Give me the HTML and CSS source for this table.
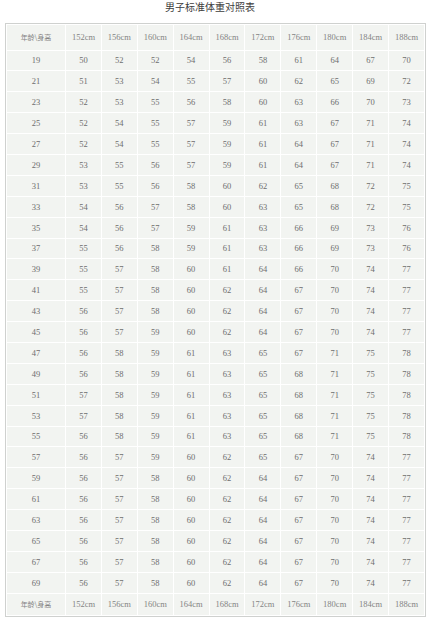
FILE: index.html
```html
<!DOCTYPE html>
<html lang="zh-CN">
<head>
<meta charset="utf-8">
<title>男子标准体重对照表</title>
<link rel="stylesheet" href="styles.css">
</head>
<body>
<div class="page">
  <h1 class="title">男子标准体重对照表</h1>
  <table class="chart">
    <colgroup><col class="col-age"><col><col><col><col><col><col><col><col><col><col></colgroup>
    <thead>
      <tr class="head"><th class="cjk">年龄\身高</th><th>152cm</th><th>156cm</th><th>160cm</th><th>164cm</th><th>168cm</th><th>172cm</th><th>176cm</th><th>180cm</th><th>184cm</th><th>188cm</th></tr>
    </thead>
    <tbody>
      <tr><td>19</td><td>50</td><td>52</td><td>52</td><td>54</td><td>56</td><td>58</td><td>61</td><td>64</td><td>67</td><td>70</td></tr>
      <tr><td>21</td><td>51</td><td>53</td><td>54</td><td>55</td><td>57</td><td>60</td><td>62</td><td>65</td><td>69</td><td>72</td></tr>
      <tr><td>23</td><td>52</td><td>53</td><td>55</td><td>56</td><td>58</td><td>60</td><td>63</td><td>66</td><td>70</td><td>73</td></tr>
      <tr><td>25</td><td>52</td><td>54</td><td>55</td><td>57</td><td>59</td><td>61</td><td>63</td><td>67</td><td>71</td><td>74</td></tr>
      <tr><td>27</td><td>52</td><td>54</td><td>55</td><td>57</td><td>59</td><td>61</td><td>64</td><td>67</td><td>71</td><td>74</td></tr>
      <tr><td>29</td><td>53</td><td>55</td><td>56</td><td>57</td><td>59</td><td>61</td><td>64</td><td>67</td><td>71</td><td>74</td></tr>
      <tr><td>31</td><td>53</td><td>55</td><td>56</td><td>58</td><td>60</td><td>62</td><td>65</td><td>68</td><td>72</td><td>75</td></tr>
      <tr><td>33</td><td>54</td><td>56</td><td>57</td><td>58</td><td>60</td><td>63</td><td>65</td><td>68</td><td>72</td><td>75</td></tr>
      <tr><td>35</td><td>54</td><td>56</td><td>57</td><td>59</td><td>61</td><td>63</td><td>66</td><td>69</td><td>73</td><td>76</td></tr>
      <tr><td>37</td><td>55</td><td>56</td><td>58</td><td>59</td><td>61</td><td>63</td><td>66</td><td>69</td><td>73</td><td>76</td></tr>
      <tr><td>39</td><td>55</td><td>57</td><td>58</td><td>60</td><td>61</td><td>64</td><td>66</td><td>70</td><td>74</td><td>77</td></tr>
      <tr><td>41</td><td>55</td><td>57</td><td>58</td><td>60</td><td>62</td><td>64</td><td>67</td><td>70</td><td>74</td><td>77</td></tr>
      <tr><td>43</td><td>56</td><td>57</td><td>58</td><td>60</td><td>62</td><td>64</td><td>67</td><td>70</td><td>74</td><td>77</td></tr>
      <tr><td>45</td><td>56</td><td>57</td><td>59</td><td>60</td><td>62</td><td>64</td><td>67</td><td>70</td><td>74</td><td>77</td></tr>
      <tr><td>47</td><td>56</td><td>58</td><td>59</td><td>61</td><td>63</td><td>65</td><td>67</td><td>71</td><td>75</td><td>78</td></tr>
      <tr><td>49</td><td>56</td><td>58</td><td>59</td><td>61</td><td>63</td><td>65</td><td>68</td><td>71</td><td>75</td><td>78</td></tr>
      <tr><td>51</td><td>57</td><td>58</td><td>59</td><td>61</td><td>63</td><td>65</td><td>68</td><td>71</td><td>75</td><td>78</td></tr>
      <tr><td>53</td><td>57</td><td>58</td><td>59</td><td>61</td><td>63</td><td>65</td><td>68</td><td>71</td><td>75</td><td>78</td></tr>
      <tr><td>55</td><td>56</td><td>58</td><td>59</td><td>61</td><td>63</td><td>65</td><td>68</td><td>71</td><td>75</td><td>78</td></tr>
      <tr><td>57</td><td>56</td><td>57</td><td>59</td><td>60</td><td>62</td><td>65</td><td>67</td><td>70</td><td>74</td><td>77</td></tr>
      <tr><td>59</td><td>56</td><td>57</td><td>58</td><td>60</td><td>62</td><td>64</td><td>67</td><td>70</td><td>74</td><td>77</td></tr>
      <tr><td>61</td><td>56</td><td>57</td><td>58</td><td>60</td><td>62</td><td>64</td><td>67</td><td>70</td><td>74</td><td>77</td></tr>
      <tr><td>63</td><td>56</td><td>57</td><td>58</td><td>60</td><td>62</td><td>64</td><td>67</td><td>70</td><td>74</td><td>77</td></tr>
      <tr><td>65</td><td>56</td><td>57</td><td>58</td><td>60</td><td>62</td><td>64</td><td>67</td><td>70</td><td>74</td><td>77</td></tr>
      <tr><td>67</td><td>56</td><td>57</td><td>58</td><td>60</td><td>62</td><td>64</td><td>67</td><td>70</td><td>74</td><td>77</td></tr>
      <tr><td>69</td><td>56</td><td>57</td><td>58</td><td>60</td><td>62</td><td>64</td><td>67</td><td>70</td><td>74</td><td>77</td></tr>
    </tbody>
    <tfoot>
      <tr class="foot"><td class="cjk">年龄\身高</td><td>152cm</td><td>156cm</td><td>160cm</td><td>164cm</td><td>168cm</td><td>172cm</td><td>176cm</td><td>180cm</td><td>184cm</td><td>188cm</td></tr>
    </tfoot>
  </table>
</div>
</body>
</html>
```
FILE: styles.css
```css
html, body {
  margin: 0;
  padding: 0;
  background: #ffffff;
}

.page {
  width: 432px;
  padding: 0 0 0 5px;
  box-sizing: border-box;
}

.title {
  margin: 0;
  height: 23px;
  padding-right: 17px;
  font-family: "Noto Sans CJK SC", "Noto Sans", sans-serif;
  font-size: 10px;
  font-weight: normal;
  line-height: 14px;
  color: #3c3c3c;
  text-align: center;
}

.chart {
  width: 421px;
  table-layout: fixed;
  border-collapse: separate;
  border-spacing: 1px;
  border: 1px solid #cfd1cf;
  background: #ffffff;
  font-family: "Liberation Serif", "Noto Sans CJK SC", serif;
  font-size: 8.5px;
  color: #6e6e6e;
}

.col-age {
  width: 58px;
}

.chart th,
.chart td {
  padding: 0;
  background: #f2f4f1;
  text-align: center;
  vertical-align: middle;
  font-weight: normal;
  height: 19.9px;
  line-height: 10px;
}

.chart .head th {
  height: 24.5px;
  color: #848484;
}

.chart .foot td {
  height: 21.5px;
  color: #848484;
}

.chart .cjk {
  font-family: "Noto Sans CJK SC", sans-serif;
  font-size: 7px;
}
```
